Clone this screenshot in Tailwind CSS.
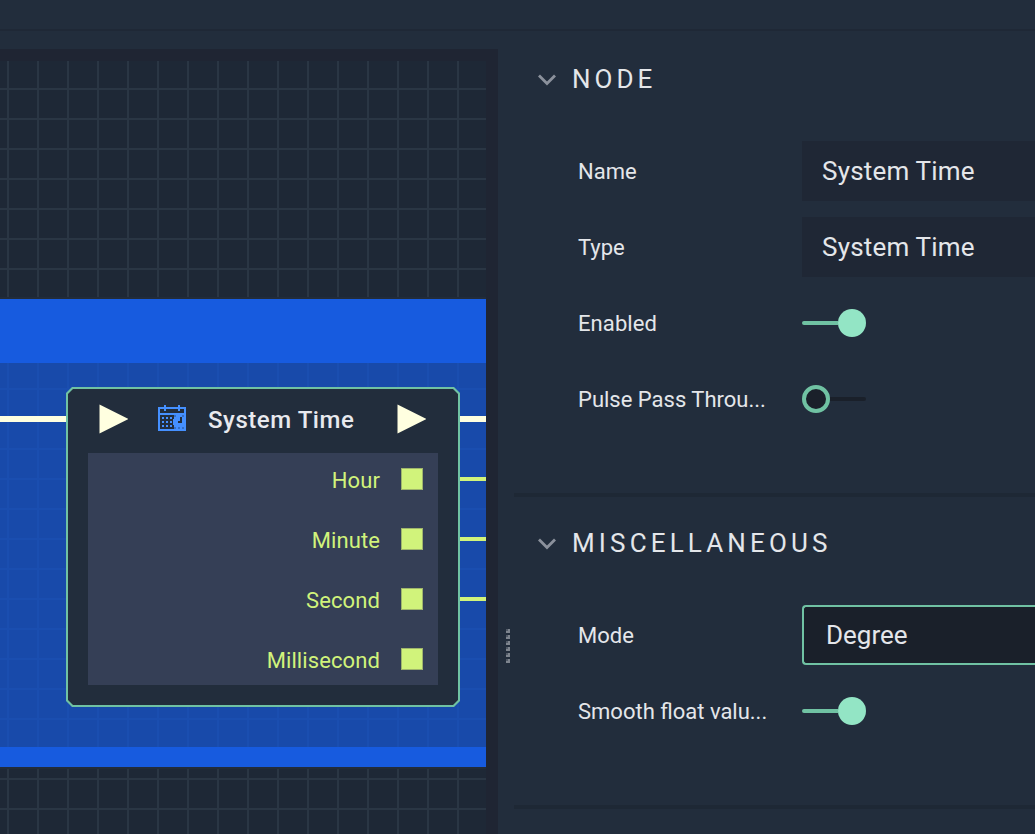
<!DOCTYPE html>
<html lang="en">
<head>
<meta charset="utf-8">
<title>Node editor</title>
<script src="https://cdn.jsdelivr.net/npm/@tailwindcss/browser@4"></script>
</head>
<body class="flex h-[834px] w-[1035px] flex-col overflow-hidden bg-[#222d3c] font-[Roboto,sans-serif] text-[#e4e6ea]">
<header class="h-[31px] shrink-0 border-b-2 border-[#1f2836]"></header>
<div class="flex min-h-0 flex-1">
  <!-- Graph canvas -->
  <main class="mt-[18px] w-[498px] shrink-0 bg-[#1f2533] pt-3 pr-3">
    <div class="relative h-[773px] overflow-hidden bg-[#1e2836]">
      <svg class="absolute inset-0" width="486" height="773" shape-rendering="crispEdges">
        <defs>
          <pattern id="grid" width="30" height="30" patternUnits="userSpaceOnUse" x="7" y="27">
            <path d="M0 0H30V2H2V30H0Z" fill="#2a3644"/>
          </pattern>
          <pattern id="gridBlue" width="30" height="30" patternUnits="userSpaceOnUse" x="7" y="27">
            <path d="M0 0H30V2H2V30H0Z" fill="#1a4eb0"/>
          </pattern>
        </defs>
        <rect width="486" height="773" fill="url(#grid)"/>
        <rect y="236" width="486" height="472" fill="#222c3a"/>
        <rect y="238" width="486" height="468" fill="#175bdf"/>
        <rect y="302" width="486" height="384" fill="#184aaa"/>
        <rect y="302" width="486" height="384" fill="url(#gridBlue)"/>
        <path d="M0 355H70V361H0ZM456 355H486V361H456Z" fill="#ffffe0"/>
        <path d="M456 416H486V420H456ZM456 476H486V480H456ZM456 536H486V540H456Z" fill="#d1f37b"/>
      </svg>
      <section class="absolute top-[326px] left-[66px] h-[320px] w-[394px] bg-[#70c2a3] p-[2px] [clip-path:polygon(6px_0,388px_0,394px_6px,394px_314px,388px_320px,6px_320px,0_314px,0_6px)]">
        <div class="flex h-full flex-col bg-[#222d3c] px-5 pb-5 [clip-path:polygon(5px_0,385px_0,390px_5px,390px_311px,385px_316px,5px_316px,0_311px,0_5px)]">
          <div class="mb-1 flex h-[60px] shrink-0 items-center pr-3 pl-[11px]">
            <svg class="shrink-0" width="29" height="30"><path d="M.5 .5L29.500 15L.5 29.500Z" fill="#ffffe0"/></svg>
            <svg class="-mt-0.5 ml-[30px] shrink-0" width="28" height="26" viewBox="0 0 28 26" fill="#4590ff" shape-rendering="crispEdges">
              <path fill-rule="evenodd" d="M0 2H6V0H8V2H20V0H22V2H28V26H0ZM2 4V8H26V4H22V6H20V4H8V6H6V4ZM2 10V24H18V22H16V20H15V14H16V12H18V10Z"/>
              <path d="M8 12h2v2h-2zM12 12h2v2h-2zM4 12h2v2H4zM4 16h2v2H4zM8 16h2v2H8zM12 16h2v2h-2zM4 20h2v2H4zM8 20h2v2H8zM12 20h2v2h-2z"/>
              <path d="M16 10h2v2h-2zM24 10h2v2h-2zM24 22h2v2h-2zM16 22h2v2h-2zM20 22h2v2h-2z" fill="#346fc6"/>
              <path d="M22 12h2v6h-4v-2h2z" fill="#222d3c"/>
            </svg>
            <h2 class="ml-[22px] flex-1 pt-px text-2xl font-medium tracking-[0.55px] whitespace-nowrap text-[#e8e9ee]">System Time</h2>
            <svg class="shrink-0" width="29" height="30"><path d="M.5 .5L29.500 15L.5 29.500Z" fill="#ffffe0"/></svg>
          </div>
          <div class="h-[232px] bg-[#353f56] pr-[15px] text-[22px] tracking-[0.1px] text-[#d1f37b]">
            <div class="flex h-[52px] items-center justify-end gap-[21px]"><span class="pt-0.5">Hour</span><i class="size-[22px] border border-[#9fb56c] bg-[#d1f37b]"></i></div>
            <div class="mt-2 flex h-[52px] items-center justify-end gap-[21px]"><span class="pt-0.5">Minute</span><i class="size-[22px] border border-[#9fb56c] bg-[#d1f37b]"></i></div>
            <div class="mt-2 flex h-[52px] items-center justify-end gap-[21px]"><span class="pt-0.5">Second</span><i class="size-[22px] border border-[#9fb56c] bg-[#d1f37b]"></i></div>
            <div class="mt-2 flex h-[52px] items-center justify-end gap-[21px]"><span class="pt-0.5">Millisecond</span><i class="size-[22px] border border-[#9fb56c] bg-[#d1f37b]"></i></div>
          </div>
        </div>
      </section>
    </div>
  </main>

  <!-- Splitter handle -->
  <div class="w-4 shrink-0 pt-[598px] pl-2">
    <svg width="4" height="34" shape-rendering="crispEdges">
      <path d="M0 0h4v4H0zM0 6h4v4H0zM0 12h4v4H0zM0 18h4v4H0zM0 24h4v4H0zM0 30h4v4H0z" fill="#7d848e"/>
      <path d="M0 0h2v2H0zM0 6h2v2H0zM0 12h2v2H0zM0 18h2v2H0zM0 24h2v2H0zM0 30h2v2H0z" fill="#505966"/>
    </svg>
  </div>

  <!-- Properties -->
  <aside class="min-w-0 flex-1">
    <section class="h-[466px] border-b-4 border-[#1e2835] pt-[18px]">
      <div class="flex h-[60px] items-center pl-6">
        <svg class="mt-0.5" width="18" height="12" fill="none" stroke="#8b919c" stroke-width="2.800"><path d="M1 1.500L9 9.500L17 1.500"/></svg>
        <h3 class="ml-4 pt-px text-[26px] tracking-[4px]">NODE</h3>
      </div>
      <div class="mt-8 flex h-[60px] items-center pl-16">
        <span class="w-[224px] text-[22px]">Name</span>
        <div class="flex h-full flex-1 items-center bg-[#1f2735] pl-5 text-[26px] tracking-[0.2px]">System Time</div>
      </div>
      <div class="mt-4 flex h-[60px] items-center pl-16">
        <span class="w-[224px] text-[22px]">Type</span>
        <div class="flex h-full flex-1 items-center bg-[#1f2735] pl-5 text-[26px] tracking-[0.2px]">System Time</div>
      </div>
      <div class="mt-4 flex h-[60px] items-center pl-16">
        <span class="w-[224px] text-[22px] tracking-[0.1px]">Enabled</span>
        <div class="flex w-16 items-center"><i class="h-1 w-9 rounded-l-full bg-[#70c2a3]"></i><i class="size-7 rounded-full bg-[#93e5c5]"></i></div>
      </div>
      <div class="mt-4 flex h-[60px] items-center pl-16">
        <span class="w-[224px] text-[22px]">Pulse Pass Throu...</span>
        <div class="flex w-16 items-center"><i class="size-7 rounded-full border-4 border-[#70c2a3] bg-[#1a202a]"></i><i class="h-1 w-9 rounded-r-full bg-[#1a202a]"></i></div>
      </div>
    </section>
    <section class="h-[312px] border-b-4 border-[#1e2835] pt-4">
      <div class="flex h-[60px] items-center pl-6">
        <svg class="mt-0.5" width="18" height="12" fill="none" stroke="#8b919c" stroke-width="2.800"><path d="M1 1.500L9 9.500L17 1.500"/></svg>
        <h3 class="ml-4 pt-px text-[26px] tracking-[4.15px]">MISCELLANEOUS</h3>
      </div>
      <div class="mt-8 flex h-[60px] items-center pl-16">
        <span class="w-[224px] text-[22px]">Mode</span>
        <div class="flex h-full flex-1 items-center rounded-l border-2 border-r-0 border-[#70c2a3] bg-[#1a202a] pl-[22px] text-[26px]">Degree</div>
      </div>
      <div class="mt-4 flex h-[60px] items-center pl-16">
        <span class="w-[224px] text-[22px]">Smooth float valu...</span>
        <div class="flex w-16 items-center"><i class="h-1 w-9 rounded-l-full bg-[#70c2a3]"></i><i class="size-7 rounded-full bg-[#93e5c5]"></i></div>
      </div>
    </section>
  </aside>
</div>
</body>
</html>
